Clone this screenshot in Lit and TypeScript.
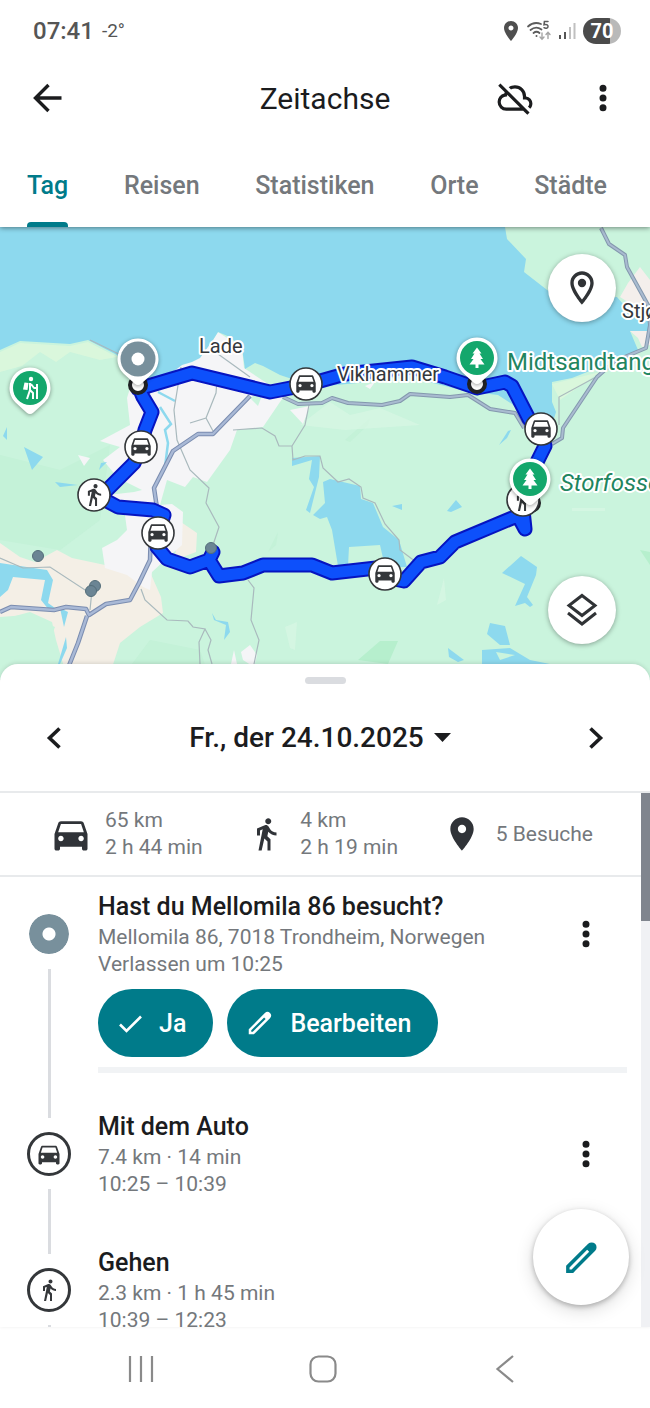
import { LitElement, html, svg, css, nothing } from "lit";
import { customElement, property, state } from "lit/decorators.js";
import { classMap } from "lit/directives/class-map.js";

const CAR =
  "M18.92 6.01C18.72 5.42 18.16 5 17.5 5h-11c-.66 0-1.21.42-1.42 1.01L3 12v8c0 .55.45 1 1 1h1c.55 0 1-.45 1-1v-1h12v1c0 .55.45 1 1 1h1c.55 0 1-.45 1-1v-8l-2.08-5.99zM6.5 16c-.83 0-1.5-.67-1.5-1.5S5.67 13 6.5 13s1.5.67 1.5 1.5S7.33 16 6.5 16zm11 0c-.83 0-1.5-.67-1.5-1.5s.67-1.5 1.5-1.5 1.5.67 1.5 1.5-.67 1.5-1.5 1.5zM5 11l1.5-4.5h11L19 11H5z";
const WALK =
  "M13.5 5.5c1.1 0 2-.9 2-2s-.9-2-2-2-2 .9-2 2 .9 2 2 2zM9.8 8.9L7 23h2.1l1.8-8 2.1 2v6h2v-7.5l-2.1-2 .6-3C14.8 12 16.8 13 19 13v-2c-1.9 0-3.5-1-4.3-2.4l-1-1.6c-.4-.6-1-1-1.7-1-.3 0-.5.1-.8.1L6 8.3V13h2v-3.4l1.8-.7";
const PIN =
  "M12 2C8.13 2 5 5.13 5 9c0 5.25 7 13 7 13s7-7.75 7-13c0-3.87-3.13-7-7-7zm0 9.5c-1.38 0-2.5-1.12-2.5-2.5s1.12-2.5 2.5-2.5 2.5 1.12 2.5 2.5-1.12 2.5-2.5 2.5z";
const PIN_OUTLINE =
  "M12 2C8.13 2 5 5.13 5 9c0 5.25 7 13 7 13s7-7.75 7-13c0-3.87-3.13-7-7-7zM7 9c0-2.76 2.24-5 5-5s5 2.24 5 5c0 2.88-2.88 7.19-5 9.88C9.92 16.21 7 11.85 7 9zm7.5 0a2.5 2.5 0 1 1-5 0a2.5 2.5 0 1 1 5 0z";
const CLOUD_OFF =
  "M19.8 22.6 17.15 20H6.5q-2.3 0-3.9-1.6T1 14.5q0-1.92 1.19-3.42 1.19-1.51 3.06-1.93.08-.2.15-.39.08-.19.15-.41L1.4 4.2l1.4-1.4 18.4 18.4ZM6.5 18h8.65L7.1 9.95q-.05.28-.08.53Q7 10.73 7 11H6.5q-1.45 0-2.48 1.02T3 14.5t1.02 2.48T6.5 18Zm15.1.75L20.15 17.35q.42-.35.64-.81T21 15.5q0-1.05-.73-1.77T18.5 13H17v-2q0-2.07-1.46-3.54T12 6q-.68 0-1.3.16-.63.16-1.2.51L8.05 5.23q.85-.6 1.84-.92T12 4q2.93 0 4.96 2.04T19 11q1.73.2 2.86 1.49T23 15.5q0 .98-.37 1.81t-1.03 1.44Z";
const PENCIL =
  "M3 16.900 15.900 4a3 3 0 0 1 4.100 0a3 3 0 0 1 0 4.100L7.100 21H3zM5 17.800V19h1.200L16.500 8.700l-1.200-1.200z";
const MORE =
  "M12 8.2a2.1 2.1 0 1 0 0-4.2a2.1 2.1 0 0 0 0 4.2zM12 14.1a2.1 2.1 0 1 0 0-4.2a2.1 2.1 0 0 0 0 4.2zM12 20a2.1 2.1 0 1 0 0-4.2a2.1 2.1 0 0 0 0 4.2z";

const icon = (d: string, size: number) =>
  html`<svg width=${size} height=${size} viewBox="0 0 24 24" fill="currentColor" fill-rule="evenodd" aria-hidden="true"><path d=${d}></path></svg>`;

const lineIcon = (d: string, size: number, stroke: number) =>
  html`<svg width=${size} height=${size} viewBox="0 0 ${size} ${size}" fill="none" stroke="currentColor" stroke-width=${stroke} aria-hidden="true"><path d=${d}></path></svg>`;

@customElement("status-bar")
class StatusBar extends LitElement {
  static styles = css`
    :host { display: flex; align-items: center; justify-content: space-between; height: 61px; padding: 0 29px 0 33px; color: #555; }
    .left, .right { display: flex; align-items: center; }
    .left { gap: 8px; }
    .right { gap: 7px; }
    .time { font-size: 24px; font-weight: 500; }
    .temp { font-size: 19px; }
    .battery { display: grid; place-items: center; width: 38px; height: 26px; border-radius: 13px; color: #fff; font-size: 20px; font-weight: 700; background: linear-gradient(90deg, #4b4b4b 70%, #b9b9b9 70%); }
  `;
  render() {
    return html`
      <div class="left"><span class="time">07:41</span><span class="temp">-2°</span></div>
      <div class="right">
        <svg width="16" height="20" viewBox="4 2 16 20" fill="#4f4f4f" aria-hidden="true"><path d=${PIN}></path></svg>
        <svg width="26" height="22" viewBox="0 0 26 22" fill="none" stroke="#5c5c5c" stroke-width="1.8" stroke-linecap="round" aria-hidden="true">
          <path d="M2 6.5C6 2.8 11 2.4 15 4M4.5 10C8 7 12 7 15.500 9.500M7.500 13c2-1.600 4-1.600 6 0"></path>
          <circle cx="10.500" cy="16" r="1" fill="#5c5c5c" stroke="none"></circle>
          <path stroke-width="1.500" d="M22 1.500h-3.600l-.4 3.300c3-.9 4.300.4 4 2-.3 1.500-2.500 2-4 .9"></path>
          <path stroke="#a5a5a5" stroke-width="1.400" d="M16 13v6M14 17l2 2.200 2-2.200M22 18.500v-6M20 14.500l2-2.200 2 2.200"></path>
        </svg>
        <svg width="17" height="18" viewBox="0 0 17 18" aria-hidden="true">
          <path fill="#555" d="M0 13h2v4H0zM5 10h2v7H5z"></path>
          <path fill="#c0c0c0" d="M10 5h2v12h-2zM14.500 1h2v16h-2z"></path>
        </svg>
        <span class="battery">70</span>
      </div>`;
  }
}

type Marker = { x: number; y: number; kind: "car" | "walk" };

const MARKERS: Marker[] = [
  { x: 306, y: 384, kind: "car" },
  { x: 141, y: 447, kind: "car" },
  { x: 94, y: 495, kind: "walk" },
  { x: 158, y: 533, kind: "car" },
  { x: 385, y: 574, kind: "car" },
  { x: 541, y: 429, kind: "car" },
  { x: 523, y: 500, kind: "walk" },
];

const ROUTE =
  "M138 389 192 373 270 392 306 385 345 374 412 367 445 377 477 388 505 382 512 386 529 419 541 432 545 446 537 462 527 490 517 516 455 542 440 557 421 562 404 581 385 577 376 568 332 573 312 565 263 565 243 573 219 576 209 560 190 567 167 559 157 547 158 533 164 515 153 510 118 507 105 500 94 495 108 489 134 463 141 447 145 430 152 412 143 397 138 385";
const SPURS = "M517 514 525 529 523 510M209 560 213 552";

const HIGHWAYS =
  "M0 612 11 607 54 610 66 607 86 609 89 615 106 604 130 600 139 583 150 560 151 528 157 508 154 488 173 451 198 434 213 434 250 396M87 616 78 643 68 668";
const HIGHWAYS_EAST =
  "M283 397 298 404 322 403 332 398 348 403 382 405 400 401 410 394 450 397 468 395 490 409 515 413 524 428M552 444 562 438 563 428 597 377 615 361 646 348 650 325 648 305 627 267 625 255 609 244 601 228";
const ROADS =
  "M90 340 125 357M181 367 174 410 177 440 190 470 209 488 206 503 219 527 213 545M218 354 250 377M217 380 216 393 206 418 190 423M206 418 213 431M233 430 262 428 275 436 279 446 292 446 305 425 309 405M0 558 23 568 50 567 85 590 92 590 90 610M141 589 145 600 167 620 188 621 193 627 205 629 199 642 200 664M205 629 211 640 208 650 212 664M248 580 254 588 251 620 259 640 254 664M292 446 293 460 305 456 320 456 323 468 338 482 349 479 361 487 363 498 375 503 385 524 399 540 400 550 416 562M596 377 559 397 559 425";

const treeGlyph = svg`<path fill="#fff" d="M0-10.500-4.500-4.500h2L-6 1h2.500L-7.500 6.500h6V10h3V6.500h6L3.500 1H6L2.500-4.500h2z"></path>`;
const hikerGlyph = svg`
  <circle cx="1" cy="-9" r="2.200" fill="#fff"></circle>
  <path fill="none" stroke="#fff" stroke-width="2" stroke-linejoin="round" d="M0-5v7l3 3v6M0 2l-3 9M1-4l3 4h4M7-4V11"></path>
  <path fill="#fff" d="M-5.500-5.500l4 .6-1 7-4.500-.6z"></path>`;

@customElement("timeline-map")
class TimelineMap extends LitElement {
  static styles = css`
    :host { display: block; position: relative; aspect-ratio: 650 / 453; overflow: hidden; background: #caf4dd; }
    .canvas { display: block; width: 100%; height: 100%; }
    .controls { position: absolute; inset: 27px 34px 36px auto; display: flex; flex-direction: column; justify-content: space-between; }
    .round { display: grid; place-items: center; width: 68px; height: 68px; padding: 0; border: 0; border-radius: 50%; background: #fff; color: #303336; box-shadow: 0 1px 5px rgba(0, 0, 0, 0.35); }
    .label { font-family: Roboto, "Liberation Sans", sans-serif; font-size: 20px; fill: #34383c; stroke: #fff; stroke-width: 4px; stroke-linejoin: round; paint-order: stroke; }
    .place { font-size: 24px; fill: #1f8560; }
    .nature { font-style: italic; }
    .pin { filter: drop-shadow(0 1px 2px rgba(0, 0, 0, 0.4)); }
  `;

  private pin(x: number, y: number, color: string, radius: number, glyph: unknown) {
    return svg`<g class="pin" transform="translate(${x} ${y})">
      <path fill="#fff" d="M0-20.500a20.500 20.500 0 0 1 14.500 35L3.500 24.500q-3.500 3-7 0L-14.500 14.500A20.500 20.500 0 0 1 0-20.500z"></path>
      <circle r=${radius} fill=${color}></circle>${glyph}
    </g>`;
  }

  private marker(m: Marker) {
    const s = m.kind === "car" ? 1.08 : 1.02;
    const cy = m.kind === "car" ? 13 : 12.2;
    return svg`<g transform="translate(${m.x} ${m.y})">
      <circle r="16" fill="#fff" stroke="#34373a" stroke-width="1.600"></circle>
      <path fill="#34373a" fill-rule="evenodd" transform="scale(${s}) translate(-12 ${-cy})" d=${m.kind === "car" ? CAR : WALK}></path>
    </g>`;
  }

  render() {
    return html`
      <svg class="canvas" viewBox="0 227 650 453" preserveAspectRatio="xMidYMid slice" role="img" aria-label="Karte">
        <rect y="227" width="650" height="453" fill="#caf4dd"></rect>
        <path fill="#b6efcd" d="M358 660 380 641 398 641 388 664zM640 550 650 552V565z"></path>
        <path fill="#bdf0d3" opacity=".5" d="M0 455 60 470 110 445 100 520 60 550 0 540zM0 630 40 615 75 680H0zM150 640 200 650 210 680H120zM345 440 370 418 368 425 350 442zM268 552 278 532 276 545z"></path>
        <path fill="#ddf8dc" opacity=".8" d="M0 352 20 343 70 346 88 342 117 357 100 360 70 352 56 362 40 352 22 366 0 372zM552 384 600 372 560 400z"></path>
        <path fill="#d8f7e4" opacity=".7" d="M285 627 297 622 295 650 290 648zM437 605 444 578 446 600zM572 508 605 508V511H572zM300 425 330 402 350 415 380 408 420 425 345 430z"></path>
        <path fill="#f4efe6" d="M0 543 20 557 35 562 57 550 72 558 105 565 150 572 161 597 163 613 140 627 120 643 108 680H62L50 640 55 627 27 615 0 617zM178 520 197 533 196 552 175 560z"></path>
        <path fill="#caf4dd" d="M0 620 30 612 52 622 56 640 68 680H0z"></path>
        <path fill="#f5f5f7" d="M131 385 182 365 213 340 218 332 242 348 244 368 262 380 285 395 280 402 263 427 237 430 230 450 207 482 193 477 185 487 167 480 160 505 172 504 183 512 182 545 165 560 152 572 150 590 143 587 127 575 105 568 102 548 117 540 127 530 124 508 108 495 134 492 142 490 118 478 103 460 120 447 100 441 130 425 127 398zM78 455 90 458 84 466zM365 386 375 382 370 389zM290 410 310 406 303 424zM241 652 250 645 257 655 254 667 243 660zM234 650 237 664H231z"></path>
        <path fill="#caf4dd" d="M250 398 264 390 258 406z"></path>
        <path fill="#8dd9ee" d="M0 227H505L507 239 526 259 524 272 560 300 617 297 630 312 650 318V331L630 331 638 350 610 363 572 378 552 382V402L556 412 552 425 537 430 525 418 512 404 498 395 465 391 425 381 392 378 358 383 325 386 295 380 280 375 263 366 255 363 245 369 242 348 230 337 218 332 213 340 200 358 192 362 182 365 160 382 133 378 117 355 88 340 70 344 20 341 0 350z"></path>
        <path fill="#f4efec" d="M640 267 650 280V317L631 304 620 297 628 283zM630 331H650V345L642 347 638 338z"></path>
        <path fill="#8dd9ee" d="M24 447 43 457 32 470zM101 463 107 462 99 470zM55 482 78 485 60 487zM3 436 7 427V440zM0 563 47 570 53 580 48 603 55 608 49 610 41 600 45 580 13 577 8 590 0 597zM60 608 68 612 64 627zM66 637 67 648 60 664H58zM292 458 320 456 319 477 310 513 306 510 314 487 309 479 312 460 292 466zM323 482 330 479 360 486 361 499 373 503 383 527 399 540 407 567 385 567 380 545 349 547 348 566 338 566 332 530 327 517 320 519 313 515 325 503zM392 506 402 504 402 510zM447 511 456 500 462 507 451 512zM502 573 521 556 537 567 536 575 527 597 533 605 530 607 525 603 515 606 525 584zM490 623 505 626 510 645 500 645 487 634zM448 648 464 660 458 662 449 657zM482 650 510 648 530 660 550 664H482zM212 613 216 620 228 622 230 632 224 640 226 625 214 620zM499 445 508 431 511 430 507 438z"></path>
        <path fill="none" stroke="#8dd9ee" stroke-width="2.500" d="M158 392 175 401M160 407 171 424 165 430 168 443 165 467"></path>
        <path fill="#caf4dd" d="M496 652 515 655 500 660z"></path>
        <path fill="none" stroke="#a9b9bd" stroke-width="1.200" d=${ROADS}></path>
        <g fill="none" stroke-linejoin="round">
          <path stroke="#7b8db0" stroke-width="4.500" d=${HIGHWAYS}></path>
          <path stroke="#a9b9d6" stroke-width="2.400" d=${HIGHWAYS}></path>
          <path stroke="#8498ae" stroke-width="4" d=${HIGHWAYS_EAST}></path>
          <path stroke="#a9bbd0" stroke-width="2" d=${HIGHWAYS_EAST}></path>
        </g>
        <g fill="none" stroke-linejoin="round" stroke-linecap="round">
          <path stroke="#0614c0" stroke-width="15" d="${ROUTE}${SPURS}"></path>
          <path stroke="#0d50fb" stroke-width="11" d="${ROUTE}${SPURS}"></path>
        </g>
        <g fill="#6b8594" stroke="#546e7a">
          <circle cx="38" cy="556" r="5.500"></circle><circle cx="95" cy="586" r="5.500"></circle>
          <circle cx="91" cy="591" r="5.500"></circle><circle cx="211" cy="548" r="5.500"></circle>
        </g>
        <g fill="#fff" stroke="#202124" stroke-width="4">
          <circle cx="138" cy="385" r="8"></circle><circle cx="477" cy="384" r="8"></circle><circle cx="531" cy="503" r="8"></circle>
        </g>
        <text class="label" x="199" y="353">Lade</text>
        <text class="label" x="337" y="381">Vikhammer</text>
        <text class="label" x="622" y="318">Stjø</text>
        <text class="label place" x="507" y="370">Midtsandtang</text>
        <text class="label place nature" x="560" y="491">Storfossen</text>
        ${MARKERS.map((m) => this.marker(m))}
        ${this.pin(138, 359, "#78909c", 17.5, svg`<circle r="6.500" fill="#fff"></circle>`)}
        ${this.pin(30, 388, "#14a76c", 17, hikerGlyph)}
        ${this.pin(477, 358, "#14a76c", 17, treeGlyph)}
        ${this.pin(530, 479, "#14a76c", 17, treeGlyph)}
      </svg>
      <div class="controls">
        <button class="round" aria-label="Orte anzeigen">${icon(PIN_OUTLINE, 40)}</button>
        <button class="round" aria-label="Ebenen">${lineIcon("M18 3.500 31 13.500 18 23.500 5 13.500zM4 21 18 32 32 21", 36, 3)}</button>
      </div>`;
  }
}

@customElement("timeline-entry")
class TimelineEntry extends LitElement {
  @property() heading = "";
  @property({ attribute: false }) lines: string[] = [];
  @property() kind: "visit" | "car" | "walk" = "visit";
  @property({ type: Boolean }) menu = false;

  static styles = css`
    :host { display: grid; grid-template-columns: 98px 1fr; padding-right: 14px; }
    .rail { display: flex; flex-direction: column; align-items: center; gap: 13px; padding-top: 22px; margin-bottom: -8px; }
    .marker { box-sizing: border-box; display: grid; place-items: center; flex: none; width: 44px; height: 44px; border: 3px solid #34373a; border-radius: 50%; color: #34373a; }
    .visit { border: 2px solid #fff; background: radial-gradient(circle, #fff 6px, #78909c 7px); background-clip: padding-box; }
    .track { flex: 1; width: 3px; background: #dadce0; }
    .head { display: flex; justify-content: space-between; padding-right: 19px; }
    .title { margin: 0; font-size: 25px; line-height: 34px; font-weight: 500; color: #1b1c1e; white-space: nowrap; }
    .line { margin: 0; font-size: 21px; line-height: 27px; color: #74787c; white-space: nowrap; }
    .more { display: grid; place-items: center; width: 44px; height: 44px; margin-top: 22px; padding: 0; border: 0; background: none; color: #1b1c1e; }
    .body { padding-bottom: 48px; }
    .compact { padding-bottom: 37px; }
  `;
  render() {
    return html`
      <div class="rail">
        <span class=${classMap({ marker: true, visit: this.kind === "visit" })}>
          ${this.kind === "car" ? icon(CAR, 28) : this.kind === "walk" ? icon(WALK, 24) : nothing}
        </span>
        <span class="track"></span>
      </div>
      <div class=${classMap({ body: true, compact: this.kind === "visit" })}>
        <div class="head">
          <div>
            <h2 class="title">${this.heading}</h2>
            ${this.lines.map((l) => html`<p class="line">${l}</p>`)}
          </div>
          ${this.menu ? html`<button class="more" aria-label="Weitere Optionen">${icon(MORE, 40)}</button>` : nothing}
        </div>
        <slot></slot>
      </div>`;
  }
}

@customElement("app-root")
class AppRoot extends LitElement {
  @state() private active = "Tag";

  static styles = css`
    :host { display: flex; flex-direction: column; height: 100vh; overflow: hidden; background: #fff; color: #1b1c1e; font-family: Roboto, "Liberation Sans", sans-serif; }
    button { font-family: inherit; cursor: pointer; }
    .plain { display: grid; place-items: center; width: 44px; height: 44px; padding: 0; border: 0; background: none; color: inherit; }
    .top { position: relative; z-index: 1; flex: none; background: #fff; box-shadow: 0 1px 5px rgba(0, 0, 0, 0.45); }
    .bar { display: grid; grid-template-columns: 1fr auto 1fr; align-items: center; height: 74px; padding: 0 25px; }
    .app-title { margin: 0; font-size: 30px; font-weight: 400; }
    .actions { display: flex; justify-content: flex-end; gap: 44px; }
    .tabs { display: flex; justify-content: space-between; height: 92px; padding: 0 43px 0 27px; }
    .tab { display: flex; flex-direction: column; justify-content: space-between; padding: 35px 0 0; border: 0; background: none; font-size: 25px; line-height: 32px; font-weight: 500; color: #74787c; }
    .tab::after { content: ""; height: 5px; border-radius: 4px 4px 0 0; }
    .current { color: #007b8a; }
    .current::after { background: #007b8a; }
    .map { flex: none; }
    .sheet { position: relative; display: flex; flex-direction: column; flex: 1; min-height: 0; margin-top: -16px; padding-top: 13px; border-radius: 18px 18px 0 0; background: #fff; box-shadow: 0 -1px 4px rgba(0, 0, 0, 0.12); }
    .handle { flex: none; align-self: center; width: 41px; height: 7px; border-radius: 4px; background: #dadce0; }
    .dates { box-sizing: border-box; display: flex; align-items: center; justify-content: space-between; flex: none; height: 109px; padding: 0 32px; border-bottom: 2px solid #e8eaec; }
    .date { display: flex; align-items: center; gap: 10px; padding: 0 10px 0 0; border: 0; background: none; color: inherit; font-size: 28px; font-weight: 500; }
    .scroller { position: relative; display: flex; flex: 1; min-height: 0; overflow: hidden; }
    .content { flex: 1; min-width: 0; }
    .scrollbar { flex: none; width: 9px; background: #f0f1f4; }
    .thumb { height: 128px; background: #80858e; }
    .stats { box-sizing: border-box; display: flex; align-items: center; justify-content: space-between; height: 84px; padding: 0 48px 0 54px; border-bottom: 2px solid #e8eaec; font-size: 21px; line-height: 27px; color: #74787c; }
    .stat { display: flex; align-items: center; gap: 17px; }
    .glyph { display: flex; align-items: center; justify-content: center; width: 34px; height: 34px; color: #303338; }
    .glyph svg { flex: none; }
    .entries { padding-top: 13px; }
    .chips { display: flex; gap: 14px; padding: 11px 0 10px; }
    .chip { display: flex; align-items: center; gap: 15px; height: 68px; padding: 0 27px 0 18px; border: 0; border-radius: 34px; background: #007b8a; color: #fff; font-size: 25px; font-weight: 500; }
    .divider { height: 6px; background: #f1f3f5; }
    .fab { position: absolute; right: 21px; bottom: 22px; display: grid; place-items: center; width: 96px; height: 96px; padding: 0; border: 0; border-radius: 50%; background: #fff; color: #007b8a; box-shadow: 0 2px 5px rgba(0, 0, 0, 0.25), 0 5px 18px rgba(0, 0, 0, 0.15); }
    .nav { display: flex; align-items: center; justify-content: center; flex: none; gap: 138px; height: 81px; padding: 2px 4px 0 0; box-sizing: border-box; color: #8a8a8a; }
  `;

  render() {
    const tabs = ["Tag", "Reisen", "Statistiken", "Orte", "Städte"];
    return html`
      <header class="top">
        <status-bar></status-bar>
        <div class="bar">
          <button class="plain" aria-label="Zurück">${lineIcon("M36.500 22H11M23.500 9 10.500 22l13 13", 44, 3.4)}</button>
          <h1 class="app-title">Zeitachse</h1>
          <div class="actions">
            <button class="plain" aria-label="Sicherung deaktiviert">${icon(CLOUD_OFF, 38)}</button>
            <button class="plain" aria-label="Menü">${icon(MORE, 40)}</button>
          </div>
        </div>
        <nav class="tabs" role="tablist">
          ${tabs.map(
            (t) => html`<button role="tab" aria-selected=${t === this.active} class=${classMap({ tab: true, current: t === this.active })} @click=${() => (this.active = t)}>${t}</button>`,
          )}
        </nav>
      </header>
      <timeline-map class="map"></timeline-map>
      <main class="sheet">
        <span class="handle"></span>
        <div class="dates">
          <button class="plain" aria-label="Vorheriger Tag">${lineIcon("M27.500 12.500 17.500 22l10 9.500", 44, 3.6)}</button>
          <button class="date">Fr., der 24.10.2025<svg width="17" height="9" viewBox="0 0 17 9" fill="currentColor" aria-hidden="true"><path d="M0 0h17L8.500 9z"></path></svg></button>
          <button class="plain" aria-label="Nächster Tag">${lineIcon("M16.500 12.500 26.500 22l-10 9.500", 44, 3.6)}</button>
        </div>
        <div class="scroller">
          <div class="content">
            <section class="stats">
              <div class="stat"><span class="glyph">${icon(CAR, 44)}</span><span>65 km<br />2 h 44 min</span></div>
              <div class="stat"><span class="glyph">${icon(WALK, 36)}</span><span>4 km<br />2 h 19 min</span></div>
              <div class="stat"><span class="glyph">${icon(PIN, 40)}</span><span>5 Besuche</span></div>
            </section>
            <div class="entries">
              <timeline-entry kind="visit" heading="Hast du Mellomila 86 besucht?" menu .lines=${["Mellomila 86, 7018 Trondheim, Norwegen", "Verlassen um 10:25"]}>
                <div class="chips">
                  <button class="chip">${lineIcon("M4 15.500l6.500 6.500L25 7.500", 28, 2.6)}Ja</button>
                  <button class="chip">${icon(PENCIL, 30)}Bearbeiten</button>
                </div>
                <div class="divider"></div>
              </timeline-entry>
              <timeline-entry kind="car" heading="Mit dem Auto" menu .lines=${["7.4 km · 14 min", "10:25 – 10:39"]}></timeline-entry>
              <timeline-entry kind="walk" heading="Gehen" .lines=${["2.3 km · 1 h 45 min", "10:39 – 12:23"]}></timeline-entry>
            </div>
          </div>
          <div class="scrollbar"><div class="thumb"></div></div>
          <button class="fab" aria-label="Tag bearbeiten">${icon(PENCIL, 41)}</button>
        </div>
      </main>
      <footer class="nav">
        <button class="plain" aria-label="Letzte Apps">${lineIcon("M11 9v26M22 9v26M33 9v26", 44, 2.2)}</button>
        <button class="plain" aria-label="Startbildschirm">${lineIcon("M17.500 9.500h9a8 8 0 0 1 8 8v9a8 8 0 0 1-8 8h-9a8 8 0 0 1-8-8v-9a8 8 0 0 1 8-8z", 44, 2.2)}</button>
        <button class="plain" aria-label="Zurück">${lineIcon("M30 9 14.500 22 30 35", 44, 2.2)}</button>
      </footer>`;
  }
}
